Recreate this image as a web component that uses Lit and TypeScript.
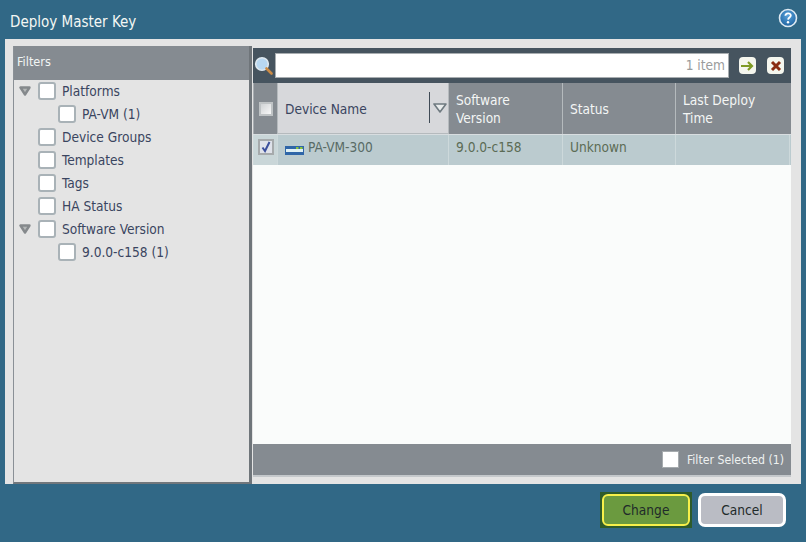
import { LitElement, html, css, svg } from "lit";
import { customElement } from "lit/decorators.js";

const tri = svg`<svg class="tri" width="12" height="10" viewBox="0 0 12 10"><path d="M1.5 1.5h9L6 8.5z" fill="#b5b8b8" stroke="#85898c" stroke-width="2.4" stroke-linejoin="round"/></svg>`;

@customElement("app-root")
export class AppRoot extends LitElement {
  static styles = css`
    :host { display: block; width: 806px; height: 542px; background: #316886; font-family: "DejaVu Sans", sans-serif; font-stretch: condensed; font-size: 13.6px; overflow: hidden; }
    * { box-sizing: border-box; }
    .title { height: 39px; display: flex; align-items: center; justify-content: space-between; padding: 5px 8px 0 10px; color: #f4f7f4; font-size: 15px; }
    .title svg { margin-top: -8px; }
    .body { margin-left: 5px; width: 796px; height: 445px; background: #e4e4e4; padding-left: 8px; display: flex; align-items: stretch; }
    .left { width: 236px; margin-top: 7px; border-left: 1px solid #8a9096; border-bottom: 2px solid #71777c; background: #e4e4e4; }
    .fhead { height: 34px; background: #858b91; color: #f2f5f4; padding: 0 0 4px 3px; display: flex; align-items: center; font-size: 12.6px; }
    .tree { margin-top: -1px; }
    .n { height: 23px; display: flex; align-items: center; color: #3a4560; padding-left: 5px; }
    .n .tri { width: 12px; margin-right: 7px; flex: none; }
    .n .sp { width: 19px; flex: none; }
    .n .sub { width: 20px; flex: none; }
    .cb { width: 18px; height: 18px; flex: none; background: #fff; border: 2px solid #a9b2b7; border-radius: 3px; margin-right: 6px; }
    .split { width: 3px; margin-top: 7px; background: #6f757a; }
    .right { width: 538px; margin-top: 9px; height: 429px; background: #fafcfb; display: flex; flex-direction: column; border-bottom: 2px solid #c4c8cb; margin-left: 1px; }
    .tool { height: 35px; background: #46545f; display: flex; align-items: center; padding: 0 6px 0 1px; flex: none; }
    .search { width: 454px; height: 25px; margin-left: 2px; background: #fff; border: 1px solid #a8adb0; color: #9a9c9c; text-align: right; padding-right: 3px; line-height: 23px; }
    .btn { width: 17px; height: 17px; background: #f5f6ee; border-radius: 4px; margin-left: 10px; display: flex; align-items: center; justify-content: center; }
    .btn + .btn { margin-left: 11px; }
    .thead, .row { display: grid; grid-template-columns: 24px 171px 114px 113px 115px; flex: none; }
    .thead { height: 51px; background: #858b91; color: #f4f6f5; }
    .th { display: flex; align-items: center; padding: 0 7px; border-left: 1px solid #b5babd; line-height: 18px; }
    .th.chk { border-left: 1px solid #a8adb1; justify-content: center; padding: 0; }
    .th.name { background: #d7d8db; color: #3a4560; padding: 2px 0 0 7px; border-bottom: 1px solid #b5babd; position: relative; }
    .hcb { width: 14px; height: 14px; background: linear-gradient(135deg, #d0d3d5, #f8f8f8); border: 2px solid #bfc3c5; }
    .sort { position: absolute; left: 151px; top: 9px; height: 31px; border-left: 1px solid #3f4a55; padding-left: 3px; display: flex; align-items: center; }
    .row { height: 31px; background: #bbcbcf; color: #5c6b55; border-top: 1px solid #d8dde0; }
    .td { display: flex; align-items: center; padding: 0 7px 7px; border-left: 1px solid #cdd9db; }
    .td:last-child { border-right: 1px solid #cdd9db; }
    .td.chk { padding: 0 0 7px; justify-content: center; background: #c9d6d8; }
    .rcb { width: 16px; height: 16px; border: 2px solid #a6aaac; background: #dfe2ea; display: flex; align-items: center; justify-content: center; }
    .dev { margin-right: 4px; margin-top: 7px; flex: none; }
    .name-txt { color: #596b66; }
    .fill { flex: 1; }
    .foot { height: 31px; background: #858b91; color: #eef1f0; display: flex; align-items: center; justify-content: flex-end; padding-right: 7px; font-size: 12.2px; flex: none; }
    .foot .cb { width: 17px; height: 17px; border: 1px solid #a6abae; border-radius: 0; margin-right: 8px; }
    .actions { display: flex; justify-content: flex-end; align-items: center; padding: 8px 20px 0 0; }
    .act { border-radius: 7px; display: flex; align-items: center; justify-content: center; color: #1f2a2a; }
    .focus { background: #2e5b2b; padding: 2px; margin-right: 6px; }
    .change { width: 88px; height: 32px; background: #6b9a3f; border: 2px solid #f7f04a; border-radius: 6px; }
    .cancel { width: 88px; height: 34px; background: #babcc4; border: 3px solid #fff; }
  `;

  private node(label: string, kind: "tri" | "sp" | "sub") {
    return html`<div class="n">
      ${kind === "tri" ? tri : kind === "sp" ? html`<span class="sp"></span>` : html`<span class="sp"></span><span class="sub"></span>`}
      <span class="cb"></span><span>${label}</span>
    </div>`;
  }

  render() {
    return html`
      <div class="title">
        <span>Deploy Master Key</span>
        <svg width="20" height="20" viewBox="0 0 20 20">
          <defs><radialGradient id="h" cx=".5" cy=".35" r=".7"><stop offset="0" stop-color="#5aa3dc"/><stop offset="1" stop-color="#1b5f9c"/></radialGradient></defs>
          <circle cx="10" cy="10" r="8.5" fill="url(#h)" stroke="#dfeaf2" stroke-width="1.6"/>
          <path d="M7.4 7.8c0-3.3 5.4-3.3 5.4-.2 0 1.9-2.6 2-2.7 4" fill="none" stroke="#fff" stroke-width="1.8"/>
          <circle cx="10" cy="14.2" r="1.2" fill="#fff"/>
        </svg>
      </div>
      <div class="body">
        <div class="left">
          <div class="fhead">Filters</div>
          <div class="tree">
            ${this.node("Platforms", "tri")}
            ${this.node("PA-VM (1)", "sub")}
            ${this.node("Device Groups", "sp")}
            ${this.node("Templates", "sp")}
            ${this.node("Tags", "sp")}
            ${this.node("HA Status", "sp")}
            ${this.node("Software Version", "tri")}
            ${this.node("9.0.0-c158 (1)", "sub")}
          </div>
        </div>
        <div class="split"></div>
        <div class="right">
          <div class="tool">
            <svg width="19" height="20" viewBox="0 0 19 20">
              <circle cx="8" cy="8" r="6.3" fill="#b8d8f2" stroke="#dfe9f0" stroke-width="1.6"/>
              <path d="M12.5 12.5l5 5" stroke="#c98a45" stroke-width="2.6" stroke-linecap="round"/>
            </svg>
            <div class="search">1 item</div>
            <div class="btn"><svg width="13" height="10" viewBox="0 0 13 10"><path d="M0 5h10M7 1l4 4-4 4" fill="none" stroke="#7f9a24" stroke-width="2.2"/></svg></div>
            <div class="btn"><svg width="12" height="12" viewBox="0 0 12 12"><path d="M2 2l8 8M10 2l-8 8" stroke="#8a2c12" stroke-width="3"/></svg></div>
          </div>
          <div class="thead">
            <div class="th chk"><span class="hcb"></span></div>
            <div class="th name">Device Name
              <span class="sort"><svg width="14" height="10" viewBox="0 0 14 10"><path d="M1 1h12L7 9z" fill="#e9ecec" stroke="#6f7a80" stroke-width="1.6" stroke-linejoin="round"/></svg></span>
            </div>
            <div class="th">Software<br />Version</div>
            <div class="th">Status</div>
            <div class="th">Last Deploy<br />Time</div>
          </div>
          <div class="row">
            <div class="td chk"><span class="rcb"><svg width="12" height="12" viewBox="0 0 12 12"><path d="M2.5 6.5l2.5 3.5L9.5 1" fill="none" stroke="#3b4f9c" stroke-width="2"/></svg></span></div>
            <div class="td">
              <svg class="dev" width="19" height="9" viewBox="0 0 19 9">
                <rect width="19" height="9" fill="#2f66a8"/><rect x="1" y="3" width="17" height="3" fill="#dff0f4"/><rect x="11" y="1" width="2.5" height="2" fill="#8cc63f"/><rect x="15" y="1" width="2.5" height="2" fill="#8cc63f"/>
              </svg>
              <span class="name-txt">PA-VM-300</span>
            </div>
            <div class="td">9.0.0-c158</div>
            <div class="td">Unknown</div>
            <div class="td"></div>
          </div>
          <div class="fill"></div>
          <div class="foot"><span class="cb"></span>Filter Selected (1)</div>
        </div>
      </div>
      <div class="actions">
        <div class="focus"><div class="act change">Change</div></div>
        <div class="act cancel">Cancel</div>
      </div>
    `;
  }
}
